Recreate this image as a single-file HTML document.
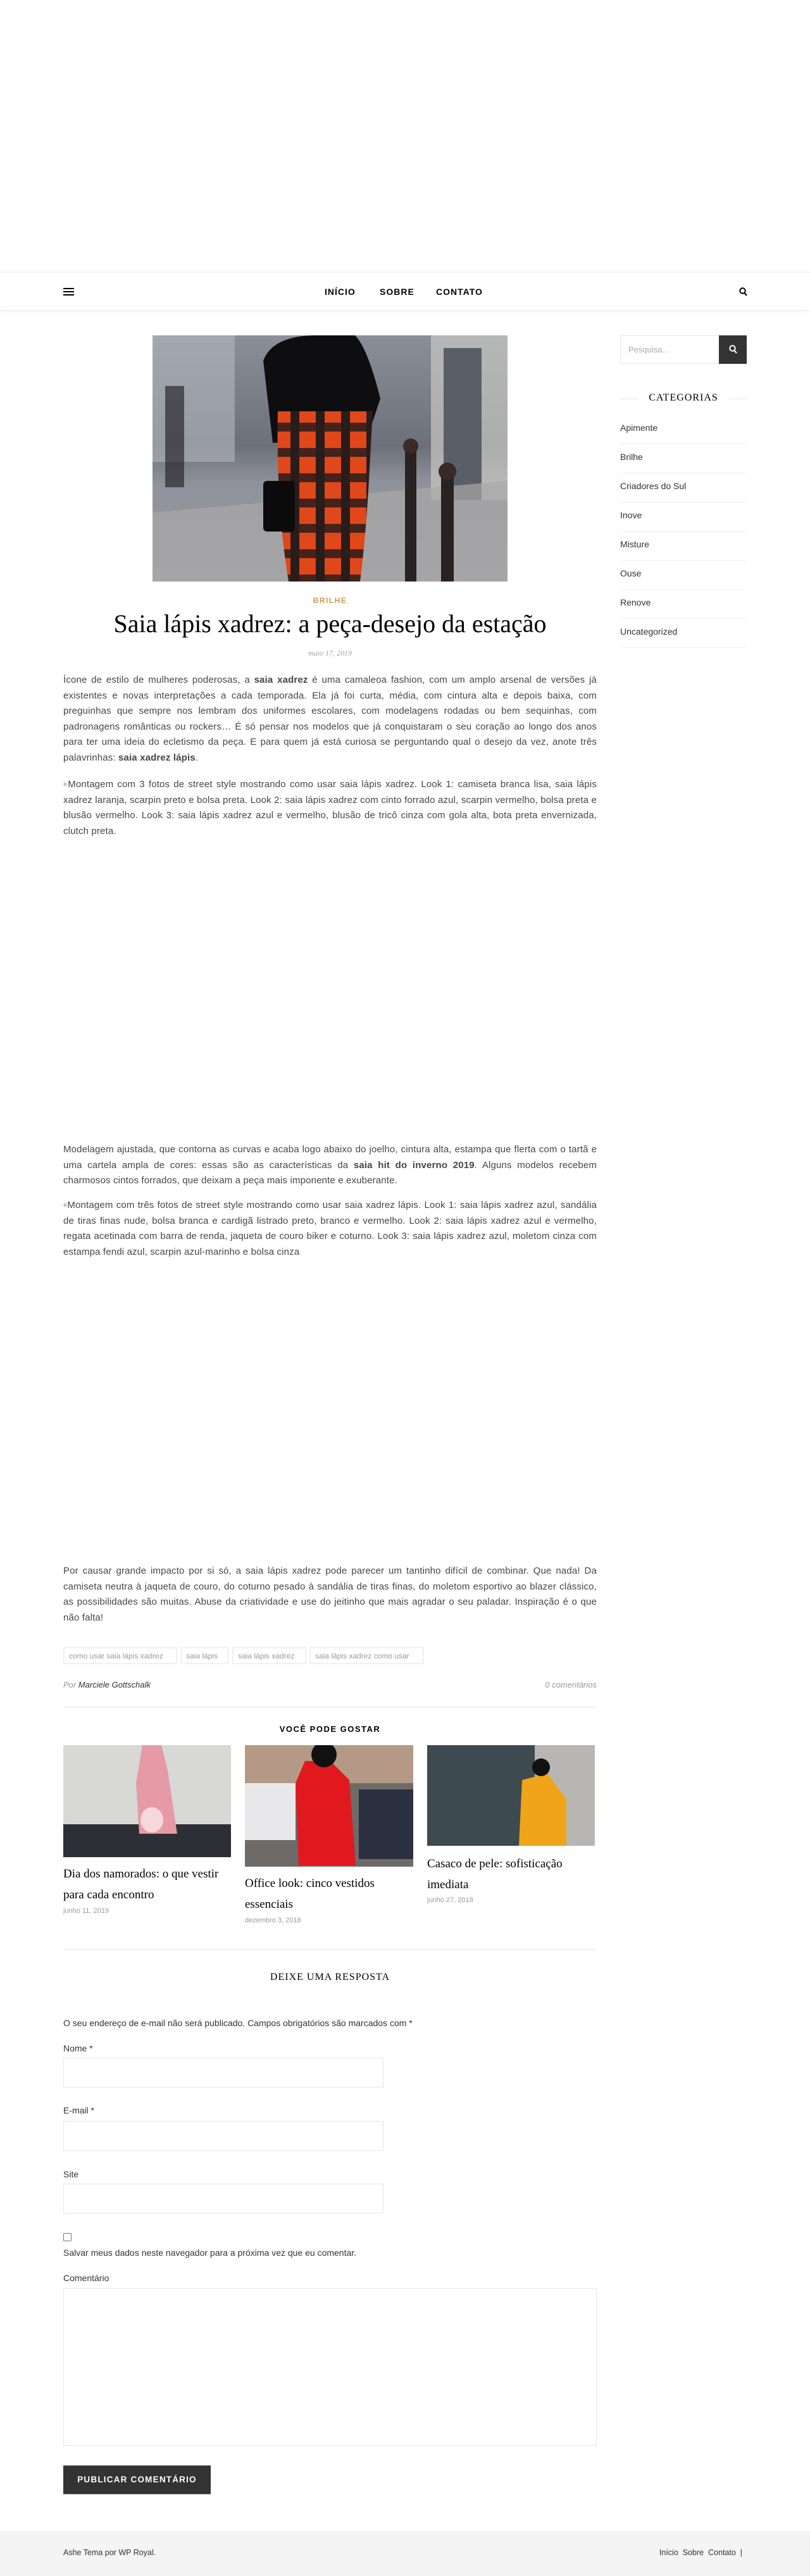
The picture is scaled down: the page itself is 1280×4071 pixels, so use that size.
<!DOCTYPE html>
<html><head><meta charset="utf-8"><style>
*{margin:0;padding:0;box-sizing:border-box}
body{width:1280px;height:4071px;position:relative;background:#fff;font-family:"Liberation Sans",sans-serif;color:#464646;overflow:hidden}
.a{position:absolute}
.nav{left:0;top:430px;width:1280px;height:60px;background:#fff;box-shadow:0 1px 5px rgba(0,0,0,.1);border-top:1px solid #f4f4f4}
.nav .m{position:absolute;top:22px;font-size:14px;font-weight:bold;letter-spacing:1px;color:#000}
.p{left:100px;width:843px;font-size:15px;letter-spacing:0.15px;line-height:24.6px;text-align:justify;color:#464646}
.cat{left:980px;width:200px;font-size:14px;color:#333;border-bottom:1px solid #eee;height:46px;padding-top:12px}
.tag{top:2603px;height:27px;border:2px solid #f0f0f0;font-size:12px;color:#999;padding:5px 7px 0;white-space:nowrap;overflow:hidden}
.rt{font-family:"Liberation Serif",serif;font-size:19px;line-height:33px;color:#000}
.rd{font-size:11px;color:#999}
.lab{left:100px;font-size:14px;color:#333}
.inp{left:100px;width:506px;height:47px;border:1px solid #e6e6e6}
</style></head><body>
<div class="a nav">
 <div class="a" style="left:100px;top:24px;width:17px;height:12px;border-top:2px solid #000;border-bottom:2px solid #000"><div style="margin-top:3px;height:2px;background:#000"></div></div>
 <div class="m" style="left:513px">INÍCIO</div>
 <div class="m" style="left:600px">SOBRE</div>
 <div class="m" style="left:689px">CONTATO</div>
 <svg class="a" style="left:1168px;top:23px" width="13" height="14" viewBox="0 0 13 14"><circle cx="5.5" cy="5.5" r="4.2" fill="none" stroke="#000" stroke-width="2"/><path d="M8.5 9l3.5 4" stroke="#000" stroke-width="2.2"/></svg>
</div>

<svg class="a" style="left:241px;top:530px" width="561" height="389" viewBox="0 0 561 389">
<defs><linearGradient id="bg" x1="0" y1="0" x2="0" y2="1"><stop offset="0" stop-color="#8a8f98"/><stop offset=".45" stop-color="#6c7079"/><stop offset=".6" stop-color="#8f929a"/><stop offset="1" stop-color="#9a9ca2"/></linearGradient>
<pattern id="pl" width="40" height="40" patternUnits="userSpaceOnUse"><rect width="40" height="40" fill="#e0471a"/><rect x="18" width="14" height="40" fill="#2a1c1a"/><rect y="18" width="40" height="14" fill="#2a1c1a" opacity=".85"/></pattern></defs>
<rect width="561" height="389" fill="url(#bg)"/>
<rect x="0" y="0" width="130" height="200" fill="#b4b8bf" opacity=".6"/>
<rect x="440" y="0" width="121" height="260" fill="#c9c8c4" opacity=".7"/>
<rect x="460" y="20" width="60" height="240" fill="#5a5e66"/>
<rect x="20" y="80" width="30" height="160" fill="#2a2a2e" opacity=".7"/>
<path d="M0 280L561 230V389H0Z" fill="#a9a8a8" opacity=".7"/>
<path d="M175 40Q190 0 260 0h60q20 20 40 100l-20 60-150 10Z" fill="#0e0e10"/>
<path d="M198 120h150l-5 90q-5 100-15 179H215q-20-120-17-269Z" fill="url(#pl)"/>
<rect x="175" y="230" width="50" height="80" rx="6" fill="#0b0b0c"/>
<rect x="399" y="170" width="18" height="219" fill="#2a2220"/><circle cx="408" cy="175" r="12" fill="#3a2a26"/>
<rect x="456" y="210" width="20" height="179" fill="#2a2220"/><circle cx="466" cy="215" r="14" fill="#3a2a26"/>
</svg>

<div class="a" style="left:100px;width:843px;top:942px;text-align:center;font-size:12px;font-weight:bold;letter-spacing:1.5px;color:#ca9b52">BRILHE</div>
<div class="a" style="left:100px;width:843px;top:962px;text-align:center;font-family:'Liberation Serif',serif;font-size:40px;color:#000">Saia lápis xadrez: a peça-desejo da estação</div>
<div class="a" style="left:100px;width:843px;top:1025px;text-align:center;font-family:'Liberation Serif',serif;font-style:italic;font-size:12px;color:#a1a1a1">maio 17, 2019</div>

<div class="a p" style="top:1063px">Ícone de estilo de mulheres poderosas, a <b>saia xadrez</b> é uma camaleoa fashion, com um amplo arsenal de versões já existentes e novas interpretações a cada temporada. Ela já foi curta, média, com cintura alta e depois baixa, com preguinhas que sempre nos lembram dos uniformes escolares, com modelagens rodadas ou bem sequinhas, com padronagens românticas ou rockers… É só pensar nos modelos que já conquistaram o seu coração ao longo dos anos para ter uma ideia do ecletismo da peça. E para quem já está curiosa se perguntando qual o desejo da vez, anote três palavrinhas: <b>saia xadrez lápis</b>.</div>
<div class="a p" style="top:1228px">▫Montagem com 3 fotos de street style mostrando como usar saia lápis xadrez. Look 1: camiseta branca lisa, saia lápis xadrez laranja, scarpin preto e bolsa preta. Look 2: saia lápis xadrez com cinto forrado azul, scarpin vermelho, bolsa preta e blusão vermelho. Look 3: saia lápis xadrez azul e vermelho, blusão de tricô cinza com gola alta, bota preta envernizada, clutch preta.</div>
<div class="a p" style="top:1805px">Modelagem ajustada, que contorna as curvas e acaba logo abaixo do joelho, cintura alta, estampa que flerta com o tartã e uma cartela ampla de cores: essas são as características da <b>saia hit do inverno 2019</b>. Alguns modelos recebem charmosos cintos forrados, que deixam a peça mais imponente e exuberante.</div>
<div class="a p" style="top:1893px">▫Montagem com três fotos de street style mostrando como usar saia xadrez lápis. Look 1: saia lápis xadrez azul, sandália de tiras finas nude, bolsa branca e cardigã listrado preto, branco e vermelho. Look 2: saia lápis xadrez azul e vermelho, regata acetinada com barra de renda, jaqueta de couro biker e coturno. Look 3: saia lápis xadrez azul, moletom cinza com estampa fendi azul, scarpin azul-marinho e bolsa cinza</div>
<div class="a p" style="top:2471px">Por causar grande impacto por si só, a saia lápis xadrez pode parecer um tantinho difícil de combinar. Que nada! Da camiseta neutra à jaqueta de couro, do coturno pesado à sandália de tiras finas, do moletom esportivo ao blazer clássico, as possibilidades são muitas. Abuse da criatividade e use do jeitinho que mais agradar o seu paladar. Inspiração é o que não falta!</div>

<div class="a tag" style="left:100px;width:180px">como usar saia lápis xadrez</div>
<div class="a tag" style="left:285px;width:76px">saia lápis</div>
<div class="a tag" style="left:367px;width:117px">saia lápis xadrez</div>
<div class="a tag" style="left:489px;width:181px">saia lápis xadrez como usar</div>
<div class="a" style="left:100px;top:2655px;font-size:13px;font-style:italic;color:#999">Por <span style="color:#333">Marciele Gottschalk</span></div>
<div class="a" style="left:800px;width:143px;text-align:right;top:2655px;font-size:13px;font-style:italic;color:#999">0 comentários</div>
<div class="a" style="left:100px;top:2697px;width:843px;height:2px;background:#f0f0f0"></div>
<div class="a" style="left:100px;width:843px;top:2725px;text-align:center;font-size:13px;font-weight:bold;letter-spacing:1.5px;color:#000">VOCÊ PODE GOSTAR</div>

<svg class="a" style="left:100px;top:2758px" width="265" height="177"><rect width="265" height="177" fill="#d8d8d6"/><rect y="125" width="265" height="52" fill="#2c2f36"/><path d="M125 0h30l10 40 15 100h-60l-5-80Z" fill="#e59aa6"/><ellipse cx="140" cy="118" rx="18" ry="20" fill="#f4d8da"/></svg>
<svg class="a" style="left:387px;top:2758px" width="266" height="192"><rect width="266" height="192" fill="#6d6a68"/><rect y="0" width="266" height="60" fill="#b49a86"/><rect x="0" y="60" width="80" height="90" fill="#e8e8ea"/><rect x="180" y="70" width="86" height="110" fill="#2c3040"/><path d="M95 25h40l30 30 10 135H85l-5-130Z" fill="#e0191e"/><circle cx="125" cy="15" r="20" fill="#111"/></svg>
<svg class="a" style="left:675px;top:2758px" width="265" height="159"><rect width="265" height="159" fill="#3d4a50"/><rect x="170" width="95" height="159" fill="#b8b6b2"/><path d="M150 55l40-10 30 40v74h-75Z" fill="#f0a419"/><circle cx="180" cy="35" r="14" fill="#111"/></svg>

<div class="a rt" style="left:100px;top:2945px;width:265px">Dia dos namorados: o que vestir para cada encontro</div>
<div class="a rd" style="left:100px;top:3014px">junho 11, 2019</div>
<div class="a rt" style="left:387px;top:2960px;width:266px">Office look: cinco vestidos essenciais</div>
<div class="a rd" style="left:387px;top:3029px">dezembro 3, 2018</div>
<div class="a rt" style="left:675px;top:2929px;width:265px">Casaco de pele: sofisticação imediata</div>
<div class="a rd" style="left:675px;top:2997px">junho 27, 2018</div>

<div class="a" style="left:100px;top:3080px;width:843px;height:2px;background:#f0f0f0"></div>
<div class="a" style="left:100px;width:843px;top:3116px;text-align:center;font-family:'Liberation Serif',serif;font-size:16px;letter-spacing:1px;color:#000">DEIXE UMA RESPOSTA</div>
<div class="a lab" style="top:3189px">O seu endereço de e-mail não será publicado. Campos obrigatórios são marcados com *</div>
<div class="a lab" style="top:3229px">Nome *</div>
<div class="a inp" style="top:3252px"></div>
<div class="a lab" style="top:3327px">E-mail *</div>
<div class="a inp" style="top:3352px"></div>
<div class="a lab" style="top:3428px">Site</div>
<div class="a inp" style="top:3451px"></div>
<div class="a" style="left:100px;top:3529px;width:13px;height:13px;border:1px solid #777;border-radius:2px"></div>
<div class="a lab" style="top:3552px">Salvar meus dados neste navegador para a próxima vez que eu comentar.</div>
<div class="a lab" style="top:3592px">Comentário</div>
<div class="a" style="left:100px;top:3616px;width:843px;height:249px;border:1px solid #e6e6e6"></div>
<div class="a" style="left:100px;top:3896px;width:233px;height:46px;background:#333;border-top:1px solid #777;border-bottom:1px solid #777;color:#fff;font-size:13.5px;font-weight:bold;letter-spacing:1.2px;padding-top:14px;text-align:center">PUBLICAR COMENTÁRIO</div>

<div class="a" style="left:0;top:4000px;width:1280px;height:71px;background:#f4f4f4"></div>
<div class="a" style="left:100px;top:4027px;font-size:12.5px;color:#333">Ashe Tema por WP Royal.</div>
<div class="a" style="left:1000px;width:173px;text-align:right;top:4027px;font-size:12.5px;color:#333">Início&nbsp; Sobre&nbsp; Contato&nbsp; |</div>

<div class="a" style="left:980px;top:530px;width:157px;height:45px;border:1px solid #e6e6e6;font-size:13px;color:#aaa;padding:14px 12px">Pesquisa...</div>
<div class="a" style="left:1136px;top:530px;width:44px;height:45px;background:#333"><svg style="margin:15px 0 0 16px" width="13" height="14" viewBox="0 0 13 14"><circle cx="5.5" cy="5.5" r="4.2" fill="none" stroke="#fff" stroke-width="2"/><path d="M8.5 9l3.5 4" stroke="#fff" stroke-width="2.2"/></svg></div>
<div class="a" style="left:980px;top:630px;width:29px;height:1px;background:#e6e6e6"></div>
<div class="a" style="left:1151px;top:630px;width:29px;height:1px;background:#e6e6e6"></div>
<div class="a" style="left:980px;width:200px;top:620px;text-align:center;font-family:'Liberation Serif',serif;font-size:16px;letter-spacing:1px;color:#000">CATEGORIAS</div>
<div class="a cat" style="top:656px">Apimente</div>
<div class="a cat" style="top:702px">Brilhe</div>
<div class="a cat" style="top:748px">Criadores do Sul</div>
<div class="a cat" style="top:794px">Inove</div>
<div class="a cat" style="top:840px">Misture</div>
<div class="a cat" style="top:886px">Ouse</div>
<div class="a cat" style="top:932px">Renove</div>
<div class="a cat" style="top:978px">Uncategorized</div>
</body></html>
